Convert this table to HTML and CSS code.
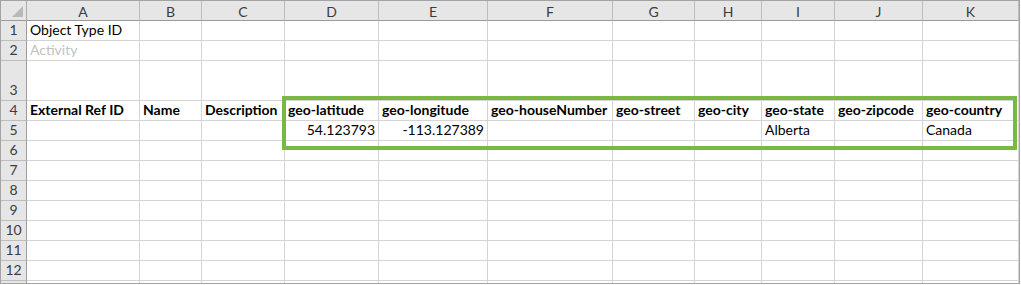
FILE: index.html
```html
<!DOCTYPE html>
<html lang="en">
<head>
<meta charset="utf-8">
<title>Import template</title>
<link rel="stylesheet" href="styles.css">
</head>
<body>
<div class="sheet">
  <div class="grid">
    <div class="corner"><span class="corner-mark"></span></div>
    <div class="col">A</div><div class="col">B</div><div class="col">C</div><div class="col">D</div><div class="col">E</div><div class="col">F</div><div class="col">G</div><div class="col">H</div><div class="col">I</div><div class="col">J</div><div class="col">K</div>

    <div class="rowh">1</div>
    <div class="c">Object Type ID</div><div class="c"></div><div class="c"></div><div class="c"></div><div class="c"></div><div class="c"></div><div class="c"></div><div class="c"></div><div class="c"></div><div class="c"></div><div class="c"></div>

    <div class="rowh">2</div>
    <div class="c muted">Activity</div><div class="c"></div><div class="c"></div><div class="c"></div><div class="c"></div><div class="c"></div><div class="c"></div><div class="c"></div><div class="c"></div><div class="c"></div><div class="c"></div>

    <div class="rowh">3</div>
    <div class="c"></div><div class="c"></div><div class="c"></div><div class="c"></div><div class="c"></div><div class="c"></div><div class="c"></div><div class="c"></div><div class="c"></div><div class="c"></div><div class="c"></div>

    <div class="rowh">4</div>
    <div class="c b">External Ref ID</div><div class="c b">Name</div><div class="c b">Description</div><div class="c b">geo-latitude</div><div class="c b">geo-longitude</div><div class="c b">geo-houseNumber</div><div class="c b">geo-street</div><div class="c b">geo-city</div><div class="c b">geo-state</div><div class="c b">geo-zipcode</div><div class="c b">geo-country</div>

    <div class="rowh">5</div>
    <div class="c"></div><div class="c"></div><div class="c"></div><div class="c num">54.123793</div><div class="c num">-113.127389</div><div class="c"></div><div class="c"></div><div class="c"></div><div class="c">Alberta</div><div class="c"></div><div class="c">Canada</div>

    <div class="rowh">6</div>
    <div class="c"></div><div class="c"></div><div class="c"></div><div class="c"></div><div class="c"></div><div class="c"></div><div class="c"></div><div class="c"></div><div class="c"></div><div class="c"></div><div class="c"></div>

    <div class="rowh">7</div>
    <div class="c"></div><div class="c"></div><div class="c"></div><div class="c"></div><div class="c"></div><div class="c"></div><div class="c"></div><div class="c"></div><div class="c"></div><div class="c"></div><div class="c"></div>

    <div class="rowh">8</div>
    <div class="c"></div><div class="c"></div><div class="c"></div><div class="c"></div><div class="c"></div><div class="c"></div><div class="c"></div><div class="c"></div><div class="c"></div><div class="c"></div><div class="c"></div>

    <div class="rowh">9</div>
    <div class="c"></div><div class="c"></div><div class="c"></div><div class="c"></div><div class="c"></div><div class="c"></div><div class="c"></div><div class="c"></div><div class="c"></div><div class="c"></div><div class="c"></div>

    <div class="rowh">10</div>
    <div class="c"></div><div class="c"></div><div class="c"></div><div class="c"></div><div class="c"></div><div class="c"></div><div class="c"></div><div class="c"></div><div class="c"></div><div class="c"></div><div class="c"></div>

    <div class="rowh">11</div>
    <div class="c"></div><div class="c"></div><div class="c"></div><div class="c"></div><div class="c"></div><div class="c"></div><div class="c"></div><div class="c"></div><div class="c"></div><div class="c"></div><div class="c"></div>

    <div class="rowh">12</div>
    <div class="c"></div><div class="c"></div><div class="c"></div><div class="c"></div><div class="c"></div><div class="c"></div><div class="c"></div><div class="c"></div><div class="c"></div><div class="c"></div><div class="c"></div>

    <!-- row 13, cut off by the window -->
    <div class="rowh cut"></div>
    <div class="c cut"></div><div class="c cut"></div><div class="c cut"></div><div class="c cut"></div><div class="c cut"></div><div class="c cut"></div><div class="c cut"></div><div class="c cut"></div><div class="c cut"></div><div class="c cut"></div><div class="c cut"></div>
  </div>
  <div class="selection" aria-hidden="true"></div>
</div>
</body>
</html>
```
FILE: styles.css
```css
* { box-sizing: border-box; }

html, body {
  margin: 0;
  padding: 0;
  background: #ffffff;
}

.sheet {
  position: relative;
  width: 1020px;
  border: 1px solid #a3a3a3;
  font-family: "Lato", "Open Sans", sans-serif;
  font-size: 14px;
  color: #000000;
}

.grid {
  display: grid;
  grid-template-columns: 26px 113px 62px 83px 94px 109px 125px 82px 67px 73px 88px 96px;
  grid-template-rows: 20px 20px 20px 40px repeat(9, 20px) 2px;
}

.corner {
  position: relative;
  background: #e6e6e6;
  border-right: 1px solid #ababab;
  border-bottom: 1px solid #9b9b9b;
}

.corner-mark {
  position: absolute;
  right: 3px;
  bottom: 3px;
  width: 0;
  height: 0;
  border-left: 11px solid transparent;
  border-bottom: 11px solid #b9b9b9;
}

.col {
  display: flex;
  align-items: center;
  justify-content: center;
  background: #e6e6e6;
  border-right: 1px solid #bdbdbd;
  border-bottom: 1px solid #9b9b9b;
  color: #3c3c3c;
  font-size: 14px;
  padding-top: 1px;
}

.rowh {
  display: flex;
  align-items: flex-end;
  justify-content: center;
  background: #e6e6e6;
  border-right: 1px solid #9b9b9b;
  border-bottom: 1px solid #bdbdbd;
  color: #3c3c3c;
  padding-bottom: 2px;
  line-height: 16px;
}

.c {
  display: flex;
  align-items: flex-end;
  border-right: 1px solid #d4d4d4;
  border-bottom: 1px solid #d4d4d4;
  padding: 0 3px 2px 3px;
  line-height: 16px;
  white-space: nowrap;
  overflow: hidden;
}

.cut {
  padding: 0;
  border-bottom: none;
}

.b { font-weight: 700; }

.num { justify-content: flex-end; }

.muted { color: #c2c2c2; }

/* highlight drawn over the geo-* columns of rows 4 and 5 */
.selection {
  position: absolute;
  left: 281px;
  top: 95px;
  width: 735px;
  height: 54px;
  border: 4px solid #79b843;
  pointer-events: none;
}
```
